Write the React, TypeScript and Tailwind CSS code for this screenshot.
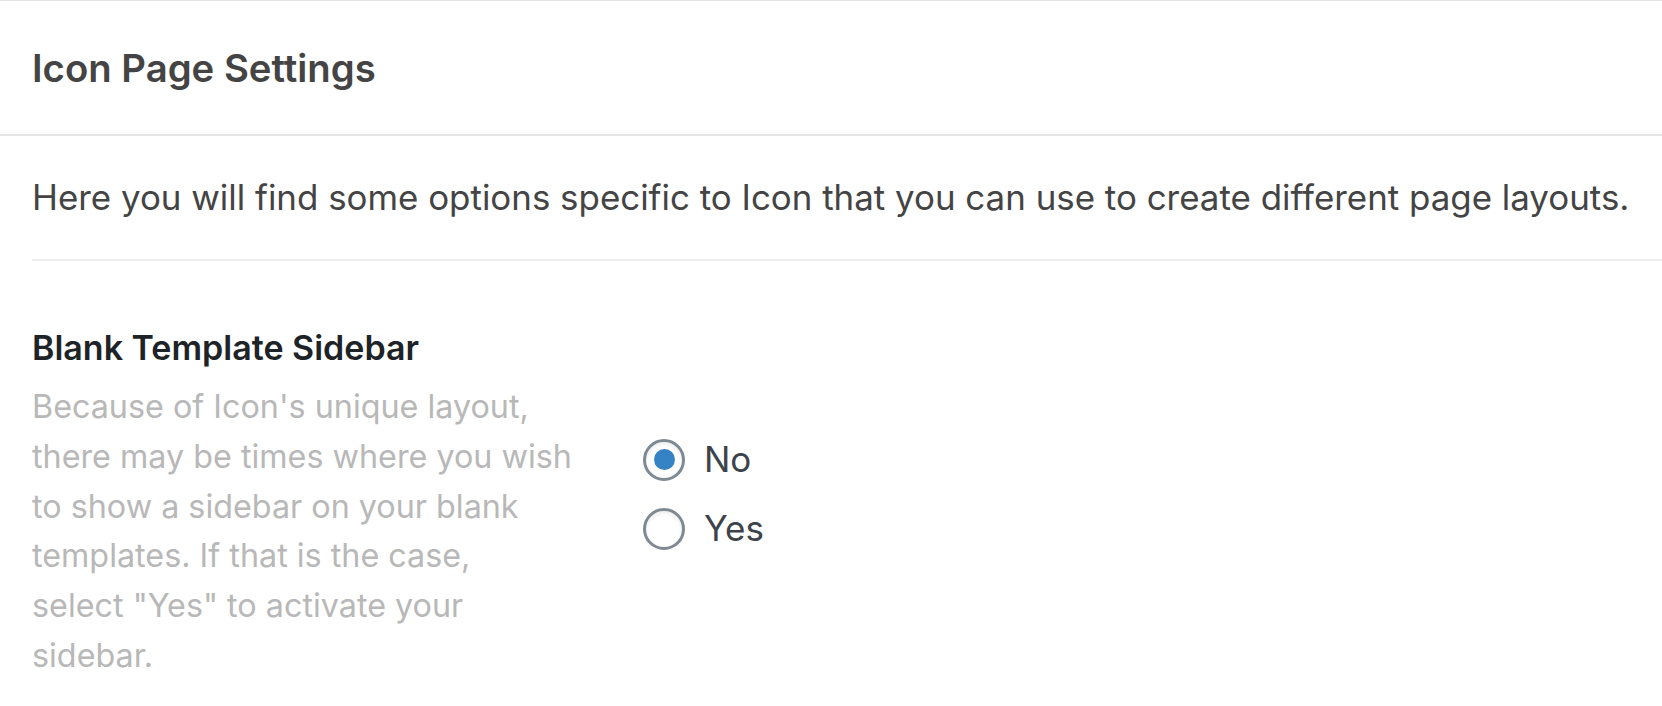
import React from "react";

function Radio({ checked, label }: { checked?: boolean; label: string }) {
  return (
    <label className="flex h-[69px] items-center">
      <span className="flex h-[42px] w-[42px] shrink-0 items-center justify-center rounded-full border-[3px] border-[#7e8993] bg-white shadow-[inset_0_2px_4px_rgba(0,0,0,0.08)]">
        {checked ? <span className="h-[21px] w-[21px] rounded-full bg-[#3582c4]" /> : null}
      </span>
      <span className="ml-[19px] text-[35px] leading-none text-[#3c434a]">{label}</span>
    </label>
  );
}

export default function App() {
  return (
    <div
      className="min-h-[706px] w-full bg-white"
      style={{ fontFamily: "Inter, 'Noto Sans', sans-serif" }}
    >
      <div className="border-t border-[#e2e4e7]" />
      <div className="flex h-[135px] items-center border-b-2 border-[#e6e6e6] px-[32px]">
        <h2 className="pt-[1px] text-[38.3px] font-semibold leading-none text-[#444444]">Icon Page Settings</h2>
      </div>
      <div className="pl-[32px]">
        <div className="flex h-[125px] items-center border-b-2 border-[#ececec]">
          <p className="text-[34.9px] leading-none text-[#444444]">
            Here you will find some options specific to Icon that you can use to create different page layouts.
          </p>
        </div>
      </div>
      <div className="flex items-start px-[32px] pt-[67px]">
        <div className="w-[566px] shrink-0">
          <div className="text-[34px] font-semibold leading-[40px] text-[#1d2327]">Blank Template Sidebar</div>
          <p className="mt-[14px] text-[32.3px] leading-[49.8px] text-[#b8b8b8]">
            Because of Icon's unique layout, there may be times where you wish to show a sidebar on your blank templates. If that is the case,
            <br />
            select "Yes" to activate your
            <br />
            sidebar.
          </p>
        </div>
        <div className="ml-[45px] pt-[97px]">
          <Radio checked label="No" />
          <Radio label="Yes" />
        </div>
      </div>
    </div>
  );
}
